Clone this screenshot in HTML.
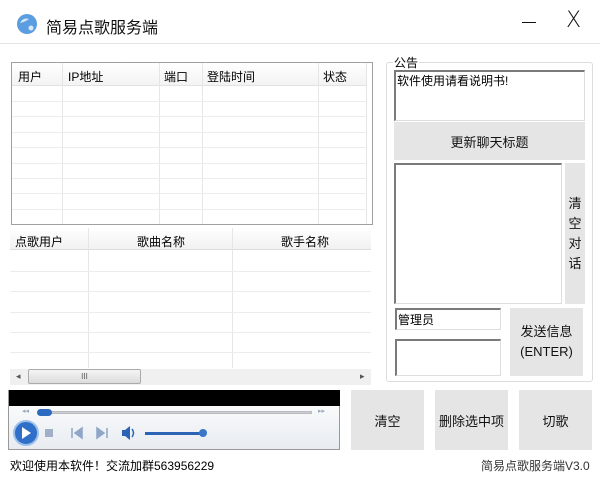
<!DOCTYPE html>
<html><head><meta charset="utf-8"><style>
*{margin:0;padding:0;box-sizing:border-box}
body{width:600px;height:478px;background:#fff;position:relative;overflow:hidden;font-family:"Liberation Sans","Noto Sans CJK SC",sans-serif;font-size:12px;color:#000}
.a{position:absolute}
.btn{position:absolute;background:#e5e5e5;display:flex;align-items:center;justify-content:center;text-align:center;font-size:13px;color:#111}
.tb{position:absolute;background:#fff;border-top:2px solid #7a7a7a;border-left:2px solid #7a7a7a;border-right:1px solid #ddd;border-bottom:1px solid #ddd}
.hl{position:absolute;height:1px;background:#ececec}
.vl{position:absolute;width:1px;background:#e6e6e6}
</style></head><body>
<div class="a" style="left:0;top:0;width:600px;height:44px;background:#fff;border-bottom:1px solid #e3e3e3"></div>
<svg class="a" style="left:16px;top:13px" width="22" height="22"><circle cx="11" cy="11" r="10" fill="#5a9de0"/><path d="M4 10 Q7 4 13 6 Q9 9 4 10Z" fill="#d6e8f8"/><circle cx="15" cy="15" r="2.5" fill="#d6e8f8"/></svg>
<div class="a" style="left:46px;top:14px;font-size:16px;color:#111">简易点歌服务端</div>
<div class="a" style="left:522px;top:22px;width:14px;height:1px;background:#111"></div>
<div class="a" style="left:566px;top:8px;font-size:22px;color:#111;font-family:'DejaVu Sans',sans-serif;font-weight:300">X</div>

<!-- list 1 -->
<div class="a" style="left:11px;top:62px;width:362px;height:163px;border:1px solid #a0a0a0;background:#fff"></div>
<div class="a" style="left:12px;top:63px;width:355px;height:23px;background:linear-gradient(#fff,#f3f3f3);border-bottom:1px solid #e2e2e2"></div>
<div class="a" style="left:18px;top:68px">用户</div>
<div class="a" style="left:68px;top:68px">IP地址</div>
<div class="a" style="left:164px;top:68px">端口</div>
<div class="a" style="left:207px;top:68px">登陆时间</div>
<div class="a" style="left:323px;top:68px">状态</div>
<div class="vl" style="left:62px;top:63px;height:161px"></div>
<div class="vl" style="left:159px;top:63px;height:161px"></div>
<div class="vl" style="left:202px;top:63px;height:161px"></div>
<div class="vl" style="left:318px;top:63px;height:161px"></div>
<div class="vl" style="left:366px;top:63px;height:161px"></div>
<div class="hl" style="left:12px;top:101px;width:355px"></div>
<div class="hl" style="left:12px;top:116px;width:355px"></div>
<div class="hl" style="left:12px;top:132px;width:355px"></div>
<div class="hl" style="left:12px;top:147px;width:355px"></div>
<div class="hl" style="left:12px;top:163px;width:355px"></div>
<div class="hl" style="left:12px;top:178px;width:355px"></div>
<div class="hl" style="left:12px;top:193px;width:355px"></div>
<div class="hl" style="left:12px;top:209px;width:355px"></div>

<!-- list 2 -->
<div class="a" style="left:10px;top:228px;width:361px;height:22px;background:linear-gradient(#fff,#f1f1f1);border-bottom:1px solid #ddd"></div>
<div class="a" style="left:15px;top:233px">点歌用户</div>
<div class="a" style="left:137px;top:233px">歌曲名称</div>
<div class="a" style="left:281px;top:233px">歌手名称</div>
<div class="vl" style="left:88px;top:228px;height:140px"></div>
<div class="vl" style="left:232px;top:228px;height:140px"></div>
<div class="hl" style="left:10px;top:271px;width:361px"></div>
<div class="hl" style="left:10px;top:291px;width:361px"></div>
<div class="hl" style="left:10px;top:312px;width:361px"></div>
<div class="hl" style="left:10px;top:332px;width:361px"></div>
<div class="hl" style="left:10px;top:352px;width:361px"></div>
<div class="a" style="left:10px;top:369px;width:361px;height:16px;background:#f0f0f0"></div>
<div class="a" style="left:16px;top:371px;font-size:9px;color:#555">◂</div>
<div class="a" style="left:28px;top:369px;width:113px;height:15px;background:linear-gradient(#f5f5f5,#dcdcdc);border:1px solid #aaa;border-radius:2px;font-size:8px;text-align:center;line-height:13px;color:#555">III</div>
<div class="a" style="left:360px;top:371px;font-size:9px;color:#555">▸</div>

<!-- player -->
<div class="a" style="left:8px;top:390px;width:332px;height:60px;border:1px solid #999;background:linear-gradient(#fff,#e8ecf1)"></div>
<div class="a" style="left:9px;top:390px;width:331px;height:16px;background:#000"></div>
<div class="a" style="left:22px;top:407px;font-size:7px;color:#9ab">◂◂</div>
<div class="a" style="left:38px;top:411px;width:274px;height:3px;background:#ccd;border:1px solid #bbb"></div>
<div class="a" style="left:37px;top:409px;width:15px;height:7px;border-radius:4px;background:#2c6cc0"></div>
<div class="a" style="left:318px;top:407px;font-size:7px;color:#9ab">▸▸</div>
<svg class="a" style="left:12px;top:420px" width="200" height="28"><circle cx="14" cy="13" r="12" fill="#2f6fc9" stroke="#9cc0ea" stroke-width="2"/><path d="M10 7 L19 13 L10 19Z" fill="#fff"/><rect x="33" y="9" width="8" height="8" fill="#9fb0c8"/><path d="M60 8v10M70 8l-7 5 7 5z" stroke="#8fa6c7" fill="#8fa6c7" stroke-width="1.5"/><path d="M85 8l7 5-7 5zM95 8v10" stroke="#8fa6c7" fill="#8fa6c7" stroke-width="1.5"/><path d="M110 10h3l5-4v14l-5-4h-3z" fill="#2c64b5"/><path d="M120 9q3 4 0 8" stroke="#2c64b5" fill="none" stroke-width="1.5"/><rect x="133" y="12" width="60" height="3" fill="#2c64b5"/><circle cx="191" cy="13" r="4" fill="#3a77c8"/></svg>

<!-- bottom buttons -->
<div class="btn" style="left:351px;top:390px;width:73px;height:60px">清空</div>
<div class="btn" style="left:435px;top:390px;width:73px;height:60px">删除选中项</div>
<div class="btn" style="left:519px;top:390px;width:73px;height:60px">切歌</div>

<div class="a" style="left:10px;top:457px;font-size:12px">欢迎使用本软件！交流加群563956229</div>
<div class="a" style="left:481px;top:457px;font-size:12px;color:#333">简易点歌服务端V3.0</div>

<!-- group -->
<div class="a" style="left:386px;top:62px;width:207px;height:320px;border:1px solid #dcdcdc;border-radius:3px"></div>
<div class="a" style="left:393px;top:54px;background:#fff;padding:0 1px">公告</div>
<div class="tb" style="left:394px;top:70px;width:191px;height:51px"></div>
<div class="a" style="left:397px;top:72px">软件使用请看说明书!</div>
<div class="btn" style="left:394px;top:122px;width:191px;height:38px">更新聊天标题</div>
<div class="tb" style="left:394px;top:163px;width:168px;height:141px"></div>
<div class="btn" style="left:565px;top:163px;width:20px;height:141px;line-height:20px">清<br>空<br>对<br>话</div>
<div class="tb" style="left:395px;top:308px;width:106px;height:22px"></div>
<div class="a" style="left:398px;top:311px">管理员</div>
<div class="tb" style="left:395px;top:339px;width:106px;height:37px"></div>
<div class="btn" style="left:510px;top:308px;width:73px;height:68px;line-height:20px">发送信息<br>(ENTER)</div>
</body></html>
